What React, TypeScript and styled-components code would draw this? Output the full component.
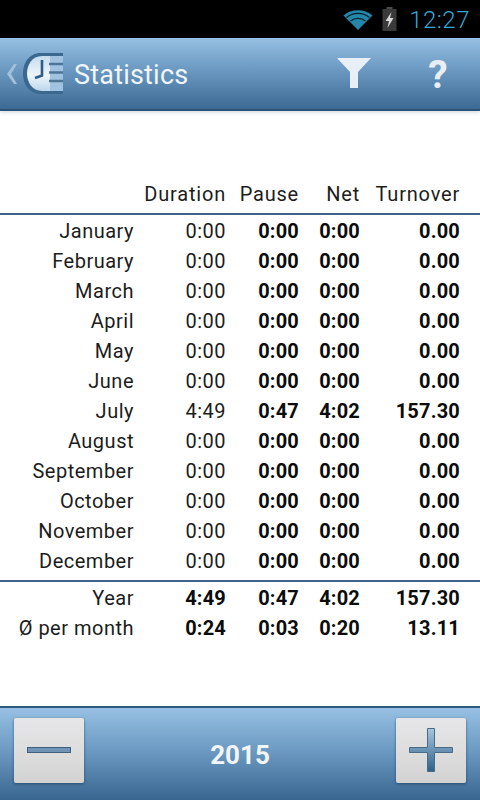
import styled, { createGlobalStyle } from 'styled-components';

const GlobalStyle = createGlobalStyle`
  html, body { margin: 0; padding: 0; background: #fff; }
  body { font-family: Roboto, "Liberation Sans", sans-serif; }
`;

const Screen = styled.div`
  width: 480px;
  height: 800px;
  display: flex;
  flex-direction: column;
  overflow: hidden;
  background: #fff;
`;

const StatusBar = styled.div`
  height: 38px;
  flex: none;
  background: #000;
  display: flex;
  align-items: center;
  justify-content: flex-end;
  padding-right: 10px;
  box-sizing: border-box;
`;

const StatusTime = styled.span`
  font-size: 24px;
  font-weight: 300;
  color: #33a9d6;
  margin-left: 12px;
  letter-spacing: 0.5px;
  position: relative;
  top: 1px;
`;

const AppBar = styled.header`
  height: 73px;
  flex: none;
  box-sizing: border-box;
  display: flex;
  align-items: center;
  background: linear-gradient(#97c0e3, #6d9bc3 42%, #3c6a94);
  border-bottom: 2px solid #2b5375;
  box-shadow: 0 2px 3px rgba(60, 90, 120, 0.18);
  position: relative;
`;

const BackMark = styled.svg`
  width: 12px;
  height: 22px;
  margin-left: 6px;
  flex: none;
`;

const AppLogo = styled.svg`
  width: 40px;
  height: 41px;
  margin-left: 5px;
  flex: none;
`;

const Title = styled.h1`
  margin: 0 0 0 11px;
  padding-top: 2px;
  font-size: 27px;
  font-weight: 400;
  color: #f0f5fa;
  letter-spacing: 0.2px;
  flex: 1;
`;

const ActionSlot = styled.div<{ $width: number }>`
  width: ${(p) => p.$width}px;
  flex: none;
  display: flex;
  justify-content: center;
  align-items: center;
`;

const HelpMark = styled.span`
  font-size: 39px;
  font-weight: 700;
  line-height: 1;
  color: #e8eff6;
  padding-top: 3px;
`;

const Main = styled.main`
  flex: 1;
  padding-top: 68px;
`;

const Row = styled.div<{ $rule?: boolean; $height?: number }>`
  display: grid;
  grid-template-columns: 134px 92px 73px 61px 100px;
  height: ${(p) => p.$height ?? 30}px;
  line-height: 30px;
  font-size: 20px;
  box-sizing: border-box;
  ${(p) => (p.$rule ? 'border-bottom: 2px solid #3d6488;' : '')}
`;

const Cell = styled.div<{ $bold?: boolean }>`
  text-align: right;
  white-space: nowrap;
  font-weight: ${(p) => (p.$bold ? 700 : 400)};
  letter-spacing: ${(p) => (p.$bold ? 0.2 : 0.5)}px;
  color: ${(p) => (p.$bold ? '#0c0c0c' : '#1c1c1c')};
`;

const HeadCell = styled(Cell)`
  letter-spacing: 0.8px;
`;

const TotalsGap = styled.div`
  height: 6px;
  border-bottom: 2px solid #3d6488;
  box-sizing: border-box;
  margin-bottom: 1px;
`;

const HeadSpacer = styled.div`
  height: 1px;
`;

const Footer = styled.footer`
  height: 94px;
  flex: none;
  box-sizing: border-box;
  border-top: 2px solid #2f5a80;
  background: linear-gradient(#97c0e3, #6d9bc3 45%, #386690);
  display: flex;
  align-items: center;
  justify-content: space-between;
  padding: 0 14px 8px 14px;
`;

const StepButton = styled.button`
  width: 70px;
  height: 65px;
  padding: 0;
  border: 0;
  border-radius: 2px;
  background: linear-gradient(#e6e6e8, #dcdcdc 60%, #d2d2d2);
  box-shadow: 0 1px 3px rgba(30, 60, 90, 0.7);
  display: flex;
  align-items: center;
  justify-content: center;
`;

const StepIcon = styled.svg`
  width: 44px;
  height: 44px;
`;

const YearLabel = styled.div`
  font-size: 26px;
  font-weight: 700;
  color: #f2f6fa;
  margin-top: 10px;
`;

const MONTHS = [
  ['January', '0:00', '0:00', '0:00', '0.00'],
  ['February', '0:00', '0:00', '0:00', '0.00'],
  ['March', '0:00', '0:00', '0:00', '0.00'],
  ['April', '0:00', '0:00', '0:00', '0.00'],
  ['May', '0:00', '0:00', '0:00', '0.00'],
  ['June', '0:00', '0:00', '0:00', '0.00'],
  ['July', '4:49', '0:47', '4:02', '157.30'],
  ['August', '0:00', '0:00', '0:00', '0.00'],
  ['September', '0:00', '0:00', '0:00', '0.00'],
  ['October', '0:00', '0:00', '0:00', '0.00'],
  ['November', '0:00', '0:00', '0:00', '0.00'],
  ['December', '0:00', '0:00', '0:00', '0.00'],
];

const TOTALS = [
  ['Year', '4:49', '0:47', '4:02', '157.30'],
  ['Ø per month', '0:24', '0:03', '0:20', '13.11'],
];

const WifiIcon = () => (
  <svg width="30" height="24" viewBox="0 0 30 24">
    <path d="M15 23 L0.5 8.5 C8 1.5 22 1.5 29.5 8.5 Z" fill="#2487a9" />
    <path d="M3.5 10.5 C10 5 20 5 26.5 10.5" fill="none" stroke="#06222c" strokeWidth="1.4" />
    <path d="M7.5 14 C12 10.5 18 10.5 22.5 14" fill="none" stroke="#06222c" strokeWidth="1.4" />
  </svg>
);

const BatteryIcon = () => (
  <svg width="15" height="24" viewBox="0 0 15 24" style={{ marginLeft: 9 }}>
    <rect x="4.5" y="0" width="6" height="2" fill="#4a4a4a" />
    <rect x="0.5" y="2" width="14" height="22" fill="#3a3a3a" />
    <path d="M9.5 5 L3.5 14 H7 L5.5 21 L11.5 11 H8 Z" fill="#d8d8d8" />
  </svg>
);

const App = () => {
  return (
    <>
      <GlobalStyle />
      <Screen>
        <StatusBar>
          <WifiIcon />
          <BatteryIcon />
          <StatusTime>12:27</StatusTime>
        </StatusBar>
        <AppBar>
          <BackMark viewBox="0 0 12 22">
            <path d="M8 1 H11 L5 11 L11 21 H8 L1 11 Z" fill="#a3c0da" />
          </BackMark>
          <AppLogo viewBox="0 0 40 41">
            <defs>
              <linearGradient id="logoFace" x1="0" y1="0" x2="0" y2="1">
                <stop offset="0" stopColor="#c4dcf1" />
                <stop offset="0.55" stopColor="#eef5fb" />
                <stop offset="1" stopColor="#bcd6ec" />
              </linearGradient>
            </defs>
            <path d="M40 0 H18 C6 0 0 10 0 20.5 C0 31 6 41 18 41 H40 Z" fill="#3a688f" />
            <path d="M40 3 H19 C9 3 4 12 4 20.5 C4 29 9 38 19 38 H40 Z" fill="url(#logoFace)" />
            <path d="M27 3 H40 V38 H27 Z" fill="#9fc3e0" />
            <path d="M19 7 V22.5 L12 25" fill="none" stroke="#2f5d86" strokeWidth="2.6" />
            <path d="M26 11 H40 M26 19.5 H40 M26 28 H40" stroke="#4f7596" strokeWidth="2.4" />
          </AppLogo>
          <Title>Statistics</Title>
          <ActionSlot $width={84}>
            <svg width="34" height="31" viewBox="0 0 34 31">
              <path d="M0 0 H34 L21 14 V30 H13 V14 Z" fill="#e8eff6" />
            </svg>
          </ActionSlot>
          <ActionSlot $width={84}>
            <HelpMark>?</HelpMark>
          </ActionSlot>
        </AppBar>
        <Main>
          <Row $rule $height={36}>
            <HeadCell />
            <HeadCell>Duration</HeadCell>
            <HeadCell>Pause</HeadCell>
            <HeadCell>Net</HeadCell>
            <HeadCell>Turnover</HeadCell>
          </Row>
          <HeadSpacer />
          {MONTHS.map(([name, duration, pause, net, turnover]) => (
            <Row key={name}>
              <Cell>{name}</Cell>
              <Cell>{duration}</Cell>
              <Cell $bold>{pause}</Cell>
              <Cell $bold>{net}</Cell>
              <Cell $bold>{turnover}</Cell>
            </Row>
          ))}
          <TotalsGap />
          {TOTALS.map(([name, duration, pause, net, turnover]) => (
            <Row key={name}>
              <Cell>{name}</Cell>
              <Cell $bold>{duration}</Cell>
              <Cell $bold>{pause}</Cell>
              <Cell $bold>{net}</Cell>
              <Cell $bold>{turnover}</Cell>
            </Row>
          ))}
        </Main>
        <Footer>
          <StepButton aria-label="Previous year">
            <StepIcon viewBox="0 0 44 44">
              <rect x="0.5" y="19.5" width="43" height="5" fill="#6f94b5" stroke="#3f5f7c" />
            </StepIcon>
          </StepButton>
          <YearLabel>2015</YearLabel>
          <StepButton aria-label="Next year">
            <StepIcon viewBox="0 0 44 44">
              <defs>
                <linearGradient id="plusFill" x1="0" y1="0" x2="0" y2="1">
                  <stop offset="0" stopColor="#a5c6e0" />
                  <stop offset="1" stopColor="#2f6088" />
                </linearGradient>
              </defs>
              <path
                d="M18.5 0.5 H25.5 V19.5 H43.5 V24.5 H25.5 V43.5 H18.5 V24.5 H0.5 V19.5 H18.5 Z"
                fill="url(#plusFill)"
                stroke="#4a6a86"
              />
            </StepIcon>
          </StepButton>
        </Footer>
      </Screen>
    </>
  );
};

export default App;
